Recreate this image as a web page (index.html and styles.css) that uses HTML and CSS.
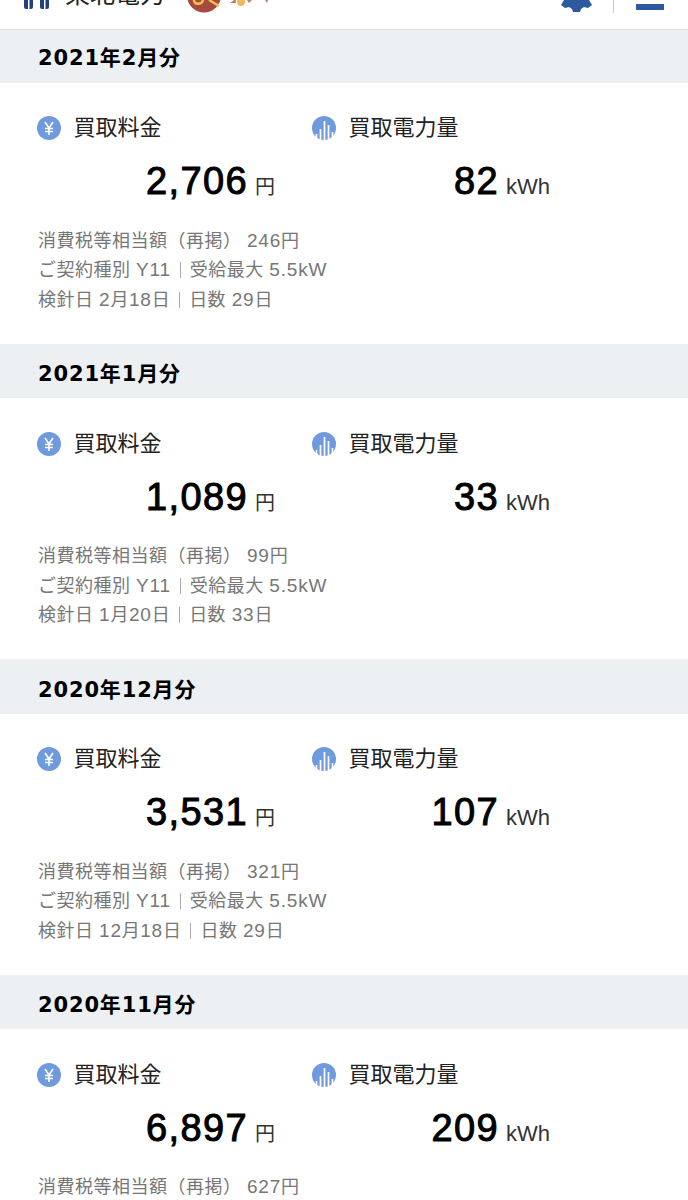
FILE: index.html
```html
<!DOCTYPE html>
<html lang="ja">
<head>
    <meta charset="UTF-8">
    <title>買取料金</title>
    <link rel="stylesheet" href="styles.css">
</head>
<body>
    <div class="header">
        <svg class="logo" width="26" height="9" viewBox="0 0 26 9">
            <path d="M1 0h4v9H3a2 2 0 0 1-2-2zM6.500 0h3.500v7a2 2 0 0 1-2 2H6.500zM17 0h4v9h-2a2 2 0 0 1-2-2zM22.500 0H26v7a2 2 0 0 1-2 2h-1.500z" fill="#24407f"/>
        </svg>
        <span class="brand">東北電力</span>
        <svg class="mascot" width="36" height="13" viewBox="0 0 36 13">
            <circle cx="17" cy="-4.500" r="17" fill="#a64a3e"/>
            <path d="M7 0c0 5 8 5 9 0M22 0l10 6" fill="none" stroke="#f2c14e" stroke-width="2.500"/>
        </svg>
        <svg class="spark" width="50" height="10" viewBox="0 0 50 10">
            <circle cx="19" cy="2" r="4" fill="#eeb95c"/>
            <path d="M8 3l4-3h2v3zM25 0h5l-3 3zM43 0h3l-1 3z" fill="#cf7b5e"/>
        </svg>
        <div class="header-right">
            <svg class="gear" width="31" height="13" viewBox="0 0 31 13">
                <path d="M3 0h25l3 5-4 3-4-1-3 2-1 3h-7l-1-3-3-2-4 1-4-3z" fill="#2d5a9e"/>
            </svg>
            <span class="header-divider"></span>
            <span class="menu-line"></span>
        </div>
    </div>

    <div class="month">
        <h2 class="month-title month-title-first">2021年2月分</h2>
        <div class="month-body">
            <div class="stats">
                <div class="stat">
                    <div class="stat-label">
                        <svg class="stat-icon" viewBox="0 0 24 24"><circle cx="12" cy="12" r="12" fill="#6f9ade"/><path d="M8 6l4 6 4-6M12 12v7M8 12.500h8M8 15.500h8" fill="none" stroke="#fff" stroke-width="1.600"/></svg>
                        <span>買取料金</span>
                    </div>
                    <div class="stat-value"><b>2,706</b><span>円</span></div>
                </div>
                <div class="stat">
                    <div class="stat-label">
                        <svg class="stat-icon" viewBox="0 0 24 24"><circle cx="12" cy="12" r="12" fill="#6f9ade"/><path d="M4.500 24v-6M8.500 24V13M12.500 24V5M16.500 24V9M20.500 24v-8" fill="none" stroke="#fff" stroke-width="1.700"/></svg>
                        <span>買取電力量</span>
                    </div>
                    <div class="stat-value"><b>82</b><span class="unit-kwh">kWh</span></div>
                </div>
            </div>
            <div class="notes">
                <p>消費税等相当額（再掲） <span class="num">246</span>円</p>
                <p>ご契約種別 <span class="num">Y11</span><i></i>受給最大 <span class="num">5.5kW</span></p>
                <p>検針日 <span class="num">2</span>月<span class="num">18</span>日<i></i>日数 <span class="num">29</span>日</p>
            </div>
        </div>
    </div>

    <div class="month">
        <h2 class="month-title">2021年1月分</h2>
        <div class="month-body">
            <div class="stats">
                <div class="stat">
                    <div class="stat-label">
                        <svg class="stat-icon" viewBox="0 0 24 24"><circle cx="12" cy="12" r="12" fill="#6f9ade"/><path d="M8 6l4 6 4-6M12 12v7M8 12.500h8M8 15.500h8" fill="none" stroke="#fff" stroke-width="1.600"/></svg>
                        <span>買取料金</span>
                    </div>
                    <div class="stat-value"><b>1,089</b><span>円</span></div>
                </div>
                <div class="stat">
                    <div class="stat-label">
                        <svg class="stat-icon" viewBox="0 0 24 24"><circle cx="12" cy="12" r="12" fill="#6f9ade"/><path d="M4.500 24v-6M8.500 24V13M12.500 24V5M16.500 24V9M20.500 24v-8" fill="none" stroke="#fff" stroke-width="1.700"/></svg>
                        <span>買取電力量</span>
                    </div>
                    <div class="stat-value"><b>33</b><span class="unit-kwh">kWh</span></div>
                </div>
            </div>
            <div class="notes">
                <p>消費税等相当額（再掲） <span class="num">99</span>円</p>
                <p>ご契約種別 <span class="num">Y11</span><i></i>受給最大 <span class="num">5.5kW</span></p>
                <p>検針日 <span class="num">1</span>月<span class="num">20</span>日<i></i>日数 <span class="num">33</span>日</p>
            </div>
        </div>
    </div>

    <div class="month">
        <h2 class="month-title">2020年12月分</h2>
        <div class="month-body">
            <div class="stats">
                <div class="stat">
                    <div class="stat-label">
                        <svg class="stat-icon" viewBox="0 0 24 24"><circle cx="12" cy="12" r="12" fill="#6f9ade"/><path d="M8 6l4 6 4-6M12 12v7M8 12.500h8M8 15.500h8" fill="none" stroke="#fff" stroke-width="1.600"/></svg>
                        <span>買取料金</span>
                    </div>
                    <div class="stat-value"><b>3,531</b><span>円</span></div>
                </div>
                <div class="stat">
                    <div class="stat-label">
                        <svg class="stat-icon" viewBox="0 0 24 24"><circle cx="12" cy="12" r="12" fill="#6f9ade"/><path d="M4.500 24v-6M8.500 24V13M12.500 24V5M16.500 24V9M20.500 24v-8" fill="none" stroke="#fff" stroke-width="1.700"/></svg>
                        <span>買取電力量</span>
                    </div>
                    <div class="stat-value"><b>107</b><span class="unit-kwh">kWh</span></div>
                </div>
            </div>
            <div class="notes">
                <p>消費税等相当額（再掲） <span class="num">321</span>円</p>
                <p>ご契約種別 <span class="num">Y11</span><i></i>受給最大 <span class="num">5.5kW</span></p>
                <p>検針日 <span class="num">12</span>月<span class="num">18</span>日<i></i>日数 <span class="num">29</span>日</p>
            </div>
        </div>
    </div>

    <div class="month">
        <h2 class="month-title">2020年11月分</h2>
        <div class="month-body">
            <div class="stats">
                <div class="stat">
                    <div class="stat-label">
                        <svg class="stat-icon" viewBox="0 0 24 24"><circle cx="12" cy="12" r="12" fill="#6f9ade"/><path d="M8 6l4 6 4-6M12 12v7M8 12.500h8M8 15.500h8" fill="none" stroke="#fff" stroke-width="1.600"/></svg>
                        <span>買取料金</span>
                    </div>
                    <div class="stat-value"><b>6,897</b><span>円</span></div>
                </div>
                <div class="stat">
                    <div class="stat-label">
                        <svg class="stat-icon" viewBox="0 0 24 24"><circle cx="12" cy="12" r="12" fill="#6f9ade"/><path d="M4.500 24v-6M8.500 24V13M12.500 24V5M16.500 24V9M20.500 24v-8" fill="none" stroke="#fff" stroke-width="1.700"/></svg>
                        <span>買取電力量</span>
                    </div>
                    <div class="stat-value"><b>209</b><span class="unit-kwh">kWh</span></div>
                </div>
            </div>
            <div class="notes">
                <p>消費税等相当額（再掲） <span class="num">627</span>円</p>
            </div>
        </div>
    </div>
</body>
</html>
```

FILE: styles.css
```css
html, body {
    height: 1200px;
    overflow: hidden;
}
body {
    margin: 0;
    padding: 0;
    font-family: "Liberation Sans", "Noto Sans CJK JP", sans-serif;
    background-color: #fff;
    color: #111;
}
.header {
    display: flex;
    align-items: flex-end;
    height: 29px;
    padding: 0 24px 0 23px;
    overflow: hidden;
    background-color: #fff;
    border-bottom: 1px solid #dde1e5;
}
.logo {
    flex-shrink: 0;
    margin-bottom: 20px;
}
.brand {
    margin: 0 0 22px 16px;
    font-size: 25px;
    line-height: 25px;
    color: #222;
}
.mascot {
    flex-shrink: 0;
    margin: 0 0 16px 22px;
}
.spark {
    flex-shrink: 0;
    margin: 0 0 19px -1px;
}
.header-right {
    display: flex;
    align-items: flex-end;
    margin-left: auto;
}
.gear {
    margin-bottom: 16px;
}
.header-divider {
    width: 1px;
    height: 13px;
    margin: 0 22px 16px 21px;
    background-color: #c8c8c8;
}
.menu-line {
    width: 28px;
    height: 6px;
    margin-bottom: 19px;
    background-color: #2d5a9e;
}
.month-title {
    margin: 0;
    padding: 6.500px 38px 0;
    font-family: "DejaVu Sans", "Noto Sans CJK JP", sans-serif;
    font-size: 21px;
    line-height: 48px;
    font-weight: 700;
    letter-spacing: 0.85px;
    color: #000;
    background-color: #edf0f3;
}
.month-title-first {
    padding-top: 5px;
    line-height: 47.500px;
}
.month-body {
    height: 261px;
    padding: 26.500px 37px 0;
    box-sizing: border-box;
    background-color: #fff;
}
.stats {
    display: flex;
}
.stat {
    width: 275px;
}
.stat-label {
    display: flex;
    align-items: center;
    gap: 12.500px;
    font-family: "Noto Sans CJK JP", sans-serif;
    font-size: 22px;
    line-height: 32px;
    color: #222;
}
.stat-icon {
    width: 24px;
    height: 24px;
    margin-top: 6px;
}
.stat-value {
    display: flex;
    align-items: baseline;
    justify-content: flex-end;
    width: 238px;
    margin-top: 15px;
    line-height: 50px;
}
.stat-value b {
    font-size: 38px;
    font-weight: 400;
    letter-spacing: 1.400px;
    -webkit-text-stroke: 1px #000;
    color: #000;
}
.stat-value span {
    margin-left: 7px;
    font-size: 20px;
    color: #333;
}
.stat-value .unit-kwh {
    font-size: 22px;
}
.notes {
    margin: 14.500px 0 0 1px;
    font-size: 18px;
    line-height: 29.500px;
    letter-spacing: 0.5px;
    color: #777;
}
.notes p {
    height: 29.500px;
    margin: 0;
}
.num {
    font-size: 19px;
    line-height: 1;
    letter-spacing: 0.8px;
}
.notes i {
    display: inline-block;
    width: 1px;
    height: 16px;
    margin: 0 9px;
    vertical-align: -2px;
    background-color: #aaa;
}
```
